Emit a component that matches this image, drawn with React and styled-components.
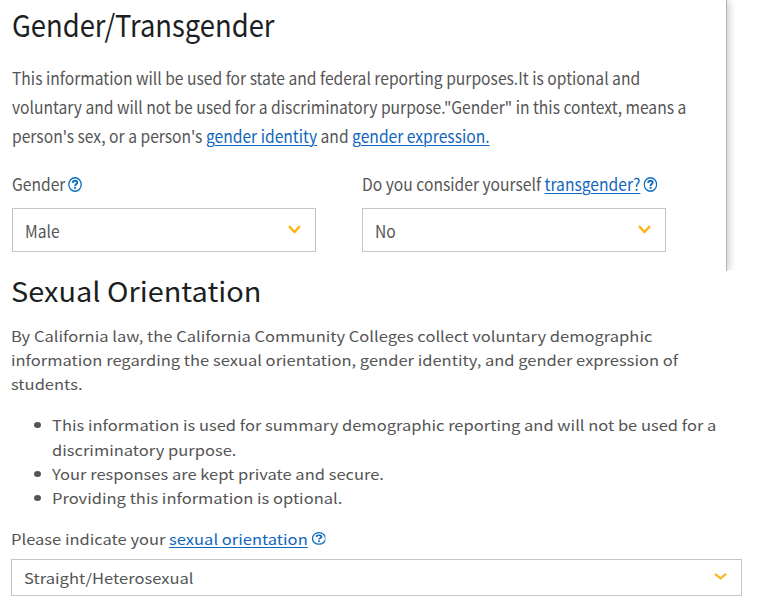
import React from 'react'
import styled, { createGlobalStyle } from 'styled-components'

const GlobalStyle = createGlobalStyle`
  * { box-sizing: border-box; }
  body {
    margin: 0;
    background: #fff;
    color: #555;
    font-family: 'Noto Sans CJK SC', 'Noto Sans', sans-serif;
  }
`

const Page = styled.main`
  width: 757px;
  height: 610px;
  overflow: hidden;
`

const TopPanel = styled.div`
  height: 271px;
  overflow: hidden;
`

const TopContent = styled.section`
  width: 727px;
  height: 271px;
  padding: 2px 0 0 12px;
  border-right: 1px solid #b0b0b0;
  box-shadow: 2px 0 8px rgba(0, 0, 0, 0.2);
`

const BottomContent = styled.section`
  margin-top: -2px;
  padding-left: 11px;
`

const Title = styled.h1`
  width: max-content;
  margin: 0;
  color: #1b1f22;
  font-size: ${props => props.size}px;
  font-weight: 400;
  line-height: 44px;
  white-space: nowrap;
  transform: scaleX(${props => props.stretch});
  transform-origin: 0 0;
`

const Copy = styled.p`
  width: max-content;
  margin: ${props => props.margin};
  font-size: ${props => props.size}px;
  line-height: ${props => props.leading}px;
  white-space: nowrap;
  transform: scaleX(${props => props.stretch});
  transform-origin: 0 0;
`

const FieldLabel = styled.div`
  display: flex;
  align-items: center;
  gap: 3px;
  width: max-content;
  height: 24px;
  font-size: ${props => props.size}px;
  line-height: 24px;
  white-space: nowrap;
  transform: scaleX(${props => props.stretch});
  transform-origin: 0 0;
`

const TextLink = styled.a`
  color: #0f66bd;
  text-decoration: underline;
  text-decoration-thickness: 1px;
  text-underline-offset: 2px;
  text-decoration-skip-ink: auto;
`

const Fields = styled.div`
  display: grid;
  grid-template-columns: 304px 304px;
  column-gap: 46px;
  margin-top: 22px;
`

const SelectBox = styled.div`
  display: flex;
  align-items: center;
  justify-content: space-between;
  width: ${props => props.width}px;
  height: ${props => props.height}px;
  margin-top: ${props => props.gap}px;
  padding: 0 13px 0 12px;
  border: 1px solid #c4c4c4;
`

const SelectValue = styled.span`
  padding-top: ${props => props.drop}px;
  font-size: ${props => props.size}px;
  line-height: 24px;
  transform: scaleX(${props => props.stretch});
  transform-origin: 0 0;
`

const Bullets = styled.ul`
  margin: 16.6px 0 16.4px;
  padding: 0 0 0 41px;
  list-style: none;
`

const Bullet = styled.li`
  display: flex;

  &::before {
    content: '';
    width: 7px;
    height: 6px;
    margin: 9px 11px 0 -18px;
    border-radius: 50%;
    background: #555;
  }
`

const HelpIcon = ({ size }) => (
  <svg width={size} height={size} viewBox="0 0 16 16" fill="none" stroke="#0b6fc2">
    <circle cx="8" cy="8" r="7.2" strokeWidth="1.5" />
    <path d="M5.3 6.2C5.5 4.7 6.5 4.1 8 4.1s2.6.7 2.6 2C10.6 7.7 8.1 7.6 8.1 9.5" strokeWidth="2.1" />
    <path d="M8.1 10.5v2.1" strokeWidth="2.2" />
  </svg>
)

const ChevronIcon = styled.svg`
  margin: 0 1px 2px 0;
`

const Chevron = ({ height }) => (
  <ChevronIcon width="13" height={height} viewBox="0 0 13 9" preserveAspectRatio="none" fill="none">
    <path d="M1 1.2l5.5 5.8L12 1.2" stroke="#fdb515" strokeWidth="2.4" />
  </ChevronIcon>
)

const Select = ({ value, size, stretch, chevron, drop, ...box }) => (
  <SelectBox {...box}>
    <SelectValue size={size} stretch={stretch} drop={drop}>{value}</SelectValue>
    <Chevron height={chevron} />
  </SelectBox>
)

const App = () => (
  <Page>
    <GlobalStyle />
    <TopPanel>
      <TopContent>
        <Title size={30.5} stretch={0.897}>Gender/Transgender</Title>
        <Copy size={17} leading={29} stretch={0.9195} margin="17px 0 0">
          This information will be used for state and federal reporting purposes.It is optional and<br />
          voluntary and will not be used for a discriminatory purpose."Gender" in this context, means a<br />
          person's sex, or a person's <TextLink>gender identity</TextLink> and <TextLink>gender expression.</TextLink>
        </Copy>
        <Fields>
          <div>
            <FieldLabel size={17} stretch={0.92}>
              <span>Gender</span>
              <HelpIcon size={15} />
            </FieldLabel>
            <Select value="Male" size={17} stretch={0.92} width={304} height={44} gap={12} chevron={9} drop={2} />
          </div>
          <div>
            <FieldLabel size={17} stretch={0.92}>
              <span>Do you consider yourself <TextLink>transgender?</TextLink></span>
              <HelpIcon size={15} />
            </FieldLabel>
            <Select value="No" size={17} stretch={0.92} width={304} height={44} gap={12} chevron={9} drop={2} />
          </div>
        </Fields>
      </TopContent>
    </TopPanel>
    <BottomContent>
      <Title size={26.5} stretch={1.092}>Sexual Orientation</Title>
      <Copy size={14.5} leading={24.2} stretch={1.1395} margin="11px 0 0">
        By California law, the California Community Colleges collect voluntary demographic<br />
        information regarding the sexual orientation, gender identity, and gender expression of<br />
        students.
      </Copy>
      <Bullets>
        <Bullet>
          <Copy size={14.5} leading={24.3} stretch={1.139} margin="0">
            This information is used for summary demographic reporting and will not be used for a<br />
            discriminatory purpose.
          </Copy>
        </Bullet>
        <Bullet>
          <Copy size={14.5} leading={24.3} stretch={1.139} margin="0">Your responses are kept private and secure.</Copy>
        </Bullet>
        <Bullet>
          <Copy size={14.5} leading={24.3} stretch={1.139} margin="0">Providing this information is optional.</Copy>
        </Bullet>
      </Bullets>
      <FieldLabel size={14.5} stretch={1.139}>
        <span>Please indicate your <TextLink>sexual orientation</TextLink></span>
        <HelpIcon size={12.8} />
      </FieldLabel>
      <Select value="Straight/Heterosexual" size={14.5} stretch={1.143} width={731} height={37} gap={8} chevron={7} drop={1} />
    </BottomContent>
  </Page>
)

export default App
